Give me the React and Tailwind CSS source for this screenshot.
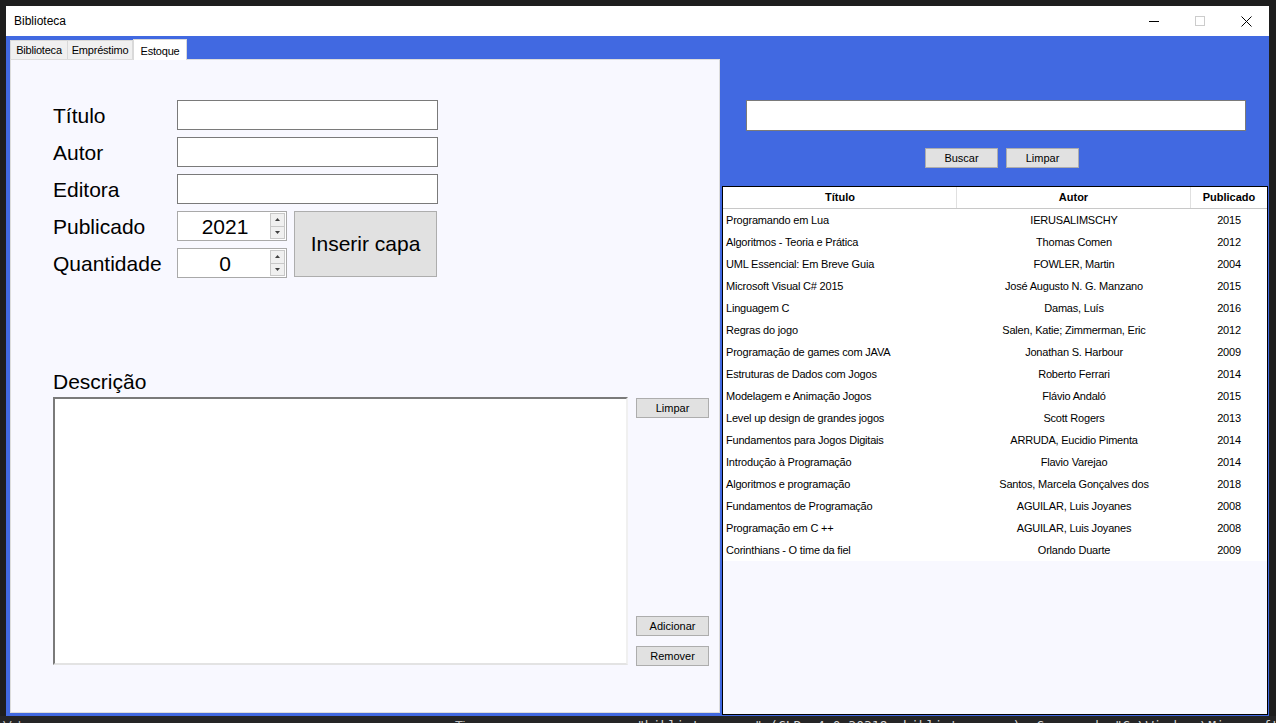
import React from "react";

const rows = [
  ["Programando em Lua", "IERUSALIMSCHY", "2015"],
  ["Algoritmos - Teoria e Prática", "Thomas Comen", "2012"],
  ["UML Essencial: Em Breve Guia", "FOWLER, Martin", "2004"],
  ["Microsoft Visual C# 2015", "José Augusto N. G. Manzano", "2015"],
  ["Linguagem C", "Damas, Luís", "2016"],
  ["Regras do jogo", "Salen, Katie; Zimmerman, Eric", "2012"],
  ["Programação de games com JAVA", "Jonathan S. Harbour", "2009"],
  ["Estruturas de Dados com Jogos", "Roberto Ferrari", "2014"],
  ["Modelagem e Animação Jogos", "Flávio Andaló", "2015"],
  ["Level up design de grandes jogos", "Scott Rogers", "2013"],
  ["Fundamentos para Jogos Digitais", "ARRUDA, Eucidio Pimenta", "2014"],
  ["Introdução à Programação", "Flavio Varejao", "2014"],
  ["Algoritmos e programação", "Santos, Marcela Gonçalves dos", "2018"],
  ["Fundamentos de Programação", "AGUILAR, Luis Joyanes", "2008"],
  ["Programação em C ++", "AGUILAR, Luis Joyanes", "2008"],
  ["Corinthians - O time da fiel", "Orlando Duarte", "2009"],
];

const font = { fontFamily: '"Liberation Sans", Arial, sans-serif' };

function WinButton({ children, className = "" }) {
  return (
    <div
      className={
        "flex items-center justify-center bg-[#e1e1e1] border border-[#adadad] text-[11px] text-black " +
        className
      }
    >
      {children}
    </div>
  );
}

function TextBox({ className = "" }) {
  return <div className={"bg-white border border-[#7a7a7a] " + className} />;
}

function Numeric({ value }) {
  return (
    <div className="w-[110px] h-[30px] bg-white border border-[#a9a9a9] flex">
      <div className="flex-1 flex items-center justify-center text-[21px] leading-none text-black pl-[2px]">
        {value}
      </div>
      <div className="w-[16px] flex flex-col py-[1px] pr-[1px]">
        <div className="flex-1 bg-[#f0f0f0] border border-[#c8c8c8] flex items-center justify-center">
          <svg width="5" height="3" viewBox="0 0 5 3">
            <path d="M2.5 0 L5 3 L0 3 Z" fill="#404040" />
          </svg>
        </div>
        <div className="flex-1 bg-[#f0f0f0] border border-[#c8c8c8] border-t-0 flex items-center justify-center">
          <svg width="5" height="3" viewBox="0 0 5 3">
            <path d="M0 0 L5 0 L2.5 3 Z" fill="#404040" />
          </svg>
        </div>
      </div>
    </div>
  );
}

function Label({ children }) {
  return <div className="w-[124px] text-[21px] leading-none text-black">{children}</div>;
}

export default function App() {
  return (
    <div className="w-[1276px] h-[723px] bg-[#1e1e1e] overflow-hidden flex flex-col" style={font}>
      <div className="flex pt-[6px] pl-[6px]">
        {/* Window */}
        <div className="w-[1263px] h-[710px] flex flex-col bg-[#4169e1]">
          {/* Title bar */}
          <div className="h-[30px] bg-white flex items-center shrink-0">
            <div className="pl-[8px] text-[12px] text-black flex-1">Biblioteca</div>
            <div className="flex items-center h-full">
              <div className="w-[46px] h-full flex items-center justify-center">
                <div className="w-[10px] h-px bg-black" />
              </div>
              <div className="w-[46px] h-full flex items-center justify-center">
                <div className="w-[10px] h-[10px] border border-[#cccccc]" />
              </div>
              <div className="w-[46px] h-full flex items-center justify-center">
                <svg width="11" height="11" viewBox="0 0 11 11">
                  <path d="M0.5 0.5 L10.5 10.5 M10.5 0.5 L0.5 10.5" stroke="#000" strokeWidth="1" />
                </svg>
              </div>
            </div>
          </div>

          {/* Body */}
          <div className="flex-1 flex min-h-0">
            {/* Left: tab control */}
            <div className="w-[714px] pl-[4px] pt-[2px] pb-[3px] flex flex-col">
              <div className="h-[21px] flex items-end shrink-0">
                <div className="w-[58px] h-[19px] flex items-center justify-center bg-[#f0f0f0] border border-[#d9d9d9] border-b-0 text-[11px] tracking-[-0.2px] text-black">
                  Biblioteca
                </div>
                <div className="w-[65px] h-[19px] flex items-center justify-center bg-[#f0f0f0] border border-[#d9d9d9] border-l-0 border-b-0 text-[11px] tracking-[-0.2px] text-black">
                  Empréstimo
                </div>
                <div className="w-[54px] h-[21px] flex items-start justify-center pt-[3px] bg-white border border-[#d9d9d9] border-b-0 text-[11px] tracking-[-0.2px] text-black -mb-px relative z-10">
                  Estoque
                </div>
              </div>
              <div className="flex-1 bg-[#f8f8ff] border border-[#dcdcdc] pl-[42px] pt-[40px] flex flex-col">
                <div className="flex flex-col gap-[7px]">
                  <div className="flex items-center h-[30px]">
                    <Label>Título</Label>
                    <TextBox className="w-[261px] h-[30px]" />
                  </div>
                  <div className="flex items-center h-[30px]">
                    <Label>Autor</Label>
                    <TextBox className="w-[261px] h-[30px]" />
                  </div>
                  <div className="flex items-center h-[30px]">
                    <Label>Editora</Label>
                    <TextBox className="w-[261px] h-[30px]" />
                  </div>
                  <div className="flex">
                    <div className="flex flex-col gap-[7px]">
                      <div className="flex items-center h-[30px]">
                        <Label>Publicado</Label>
                        <Numeric value="2021" />
                      </div>
                      <div className="flex items-center h-[30px]">
                        <Label>Quantidade</Label>
                        <Numeric value="0" />
                      </div>
                    </div>
                    <WinButton className="ml-[7px] w-[143px] h-[66px] !text-[21px]">Inserir capa</WinButton>
                  </div>
                </div>

                <div className="mt-[92px] text-[21px] leading-[24px] text-black">Descrição</div>
                <div className="flex mt-[3px]">
                  <div className="w-[575px] h-[268px] bg-white border-2 border-t-[#7a7a7a] border-l-[#7a7a7a] border-b-[#e3e3e3] border-r-[#f0f0f0]" />
                  <div className="ml-[8px] w-[73px] flex flex-col">
                    <WinButton className="mt-px h-[20px]">Limpar</WinButton>
                    <WinButton className="mt-auto h-[20px]">Adicionar</WinButton>
                    <WinButton className="mt-[10px] h-[20px] -mb-px">Remover</WinButton>
                  </div>
                </div>
              </div>
            </div>

            {/* Right panel */}
            <div className="flex-1 flex flex-col pt-[64px]">
              <TextBox className="ml-[26px] w-[500px] h-[31px]" />
              <div className="flex gap-[8px] mt-[17px] ml-[205px]">
                <WinButton className="w-[73px] h-[20px]">Buscar</WinButton>
                <WinButton className="w-[73px] h-[20px]">Limpar</WinButton>
              </div>
              <div className="mt-[18px] ml-[2px] w-[546px] flex-1 mb-[1px] border border-black bg-[#f8f8ff] flex flex-col">
                <div className="flex h-[22px] bg-white border-b border-[#c8c8c8] text-[11px] font-bold text-black">
                  <div className="w-[233px] ml-px flex items-center justify-center border-r border-[#e0e0e0]">Título</div>
                  <div className="w-[234px] flex items-center justify-center border-r border-[#e0e0e0]">Autor</div>
                  <div className="flex-1 flex items-center justify-center">Publicado</div>
                </div>
                <div className="bg-white">
                  {rows.map((r, i) => (
                    <div key={i} className="flex h-[22px] items-center text-[11px] tracking-[-0.2px] text-black">
                      <div className="w-[234px] pl-[3px] whitespace-nowrap">{r[0]}</div>
                      <div className="w-[234px] text-center whitespace-nowrap">{r[1]}</div>
                      <div className="flex-1 text-center">{r[2]}</div>
                    </div>
                  ))}
                </div>
              </div>
            </div>
          </div>
        </div>
      </div>
      {/* Bottom strip of the editor behind */}
      <div className="flex-1 bg-[#252526] overflow-hidden">
        <div className="flex text-[13px] leading-[14px] text-[#d4d4d4] pt-[3px]" style={{ fontFamily: '"DejaVu Sans Mono", monospace' }}>
          <div className="w-[455px] shrink-0 pl-[3px] text-[#bbbbbb]" style={font}>Valor</div>
          <div className="w-[182px] shrink-0 text-[#bbbbbb]" style={font}>Tipo</div>
          <div className="whitespace-nowrap shrink-0">"biblioteca.exe" (CLR v4.0.30319: biblioteca.exe): Carregado "C:\Windows\Microsoft.Net\asse</div>
        </div>
      </div>
    </div>
  );
}
